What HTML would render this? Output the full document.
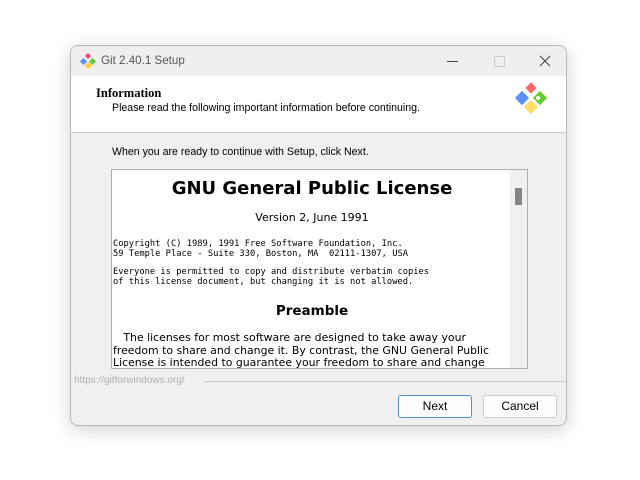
<!DOCTYPE html>
<html><head><style>
body{margin:0;width:640px;height:480px;background:#fff;position:relative;overflow:hidden;font-family:"Liberation Sans",sans-serif;}
.win{position:absolute;left:70px;top:45px;width:495px;height:379px;background:#f0f0f0;border:1px solid #b8b8b8;border-radius:8px;overflow:hidden;box-shadow:0 4px 18px rgba(0,0,0,.18);}
.title{position:absolute;left:0;top:0;width:495px;height:30px;background:#efefef;}
.title span{position:absolute;left:30px;top:8px;font-size:11.6px;color:#555;}
.hdr{position:absolute;left:0;top:30px;width:495px;height:56px;background:#fff;border-bottom:1px solid #c8c8c8;}
.abs{position:absolute;}
.box{position:absolute;left:40px;top:123px;width:415px;height:198px;background:#fff;border:1px solid #b0b0b0;overflow:hidden;}
.mono{font-family:"DejaVu Sans Mono","Liberation Mono",monospace;font-size:8.75px;line-height:9.5px;color:#000;position:absolute;left:1px;white-space:pre;}
.btn{position:absolute;top:349px;width:72px;height:21px;border:1px solid #ccc;border-radius:3px;background:#fdfdfd;font-size:12px;text-align:center;line-height:21px;color:#000;}
</style></head><body>
<div class="win">
 <div class="title">
  <svg class="abs" style="left:9px;top:7px" width="16" height="16" viewBox="0 0 16 16"><rect x="1" y="6" width="5" height="5" fill="#5b8ff9" transform="rotate(45 3.5 8.5)"/><rect x="6" y="1" width="4" height="4" fill="#f36" transform="rotate(45 8 3)"/><rect x="10" y="6" width="5" height="5" fill="#6c3" transform="rotate(45 12.5 8.5)"/><rect x="6" y="10" width="5" height="5" fill="#fc3" transform="rotate(45 8.5 12.5)"/></svg>
  <span>Git 2.40.1 Setup</span>
  <div class="abs" style="left:376px;top:15px;width:11px;height:1px;background:#444"></div>
  <div class="abs" style="left:423px;top:10px;width:9px;height:9px;border:1px solid #ccc"></div>
  <svg class="abs" style="left:468px;top:9px" width="12" height="12"><path d="M1 1L11 11M11 1L1 11" stroke="#444" stroke-width="1.1"/></svg>
 </div>
 <div class="hdr">
  <div class="abs" style="left:25px;top:10px;font-weight:bold;font-family:'Liberation Serif',serif;font-size:12.5px">Information</div>
  <div class="abs" style="left:41px;top:26px;font-size:10.6px;color:#000">Please read the following important information before continuing.</div>
  <svg class="abs" style="left:442px;top:5px" width="36" height="36" viewBox="0 0 36 36"><rect x="4" y="12" width="10" height="10" fill="#5b8ff9" transform="rotate(45 9 17)"/><rect x="14" y="3" width="8" height="8" fill="#f66" transform="rotate(45 18 7)"/><rect x="22" y="12" width="10" height="10" fill="#6c3" transform="rotate(45 27 17)"/><rect x="13" y="21" width="10" height="10" fill="#fd6" transform="rotate(45 18 26)"/><circle cx="25" cy="17" r="2" fill="#fff"/></svg>
 </div>
 <div class="abs" style="left:41px;top:100px;font-size:10.6px">When you are ready to continue with Setup, click Next.</div>
 <div class="box">
  <div class="abs" style="left:0;width:400px;top:8px;text-align:center;font-family:'DejaVu Sans',sans-serif;font-weight:bold;font-size:18px">GNU General Public License</div>
  <div class="abs" style="left:0;width:400px;top:41px;text-align:center;font-family:'DejaVu Sans',sans-serif;font-size:11px">Version 2, June 1991</div>
  <div class="mono" style="top:70px">Copyright (C) 1989, 1991 Free Software Foundation, Inc.
59 Temple Place - Suite 330, Boston, MA  02111-1307, USA</div>
  <div class="mono" style="top:98px">Everyone is permitted to copy and distribute verbatim copies
of this license document, but changing it is not allowed.</div>
  <div class="abs" style="left:0;width:400px;top:133px;text-align:center;font-family:'DejaVu Sans',sans-serif;font-weight:bold;font-size:13.5px">Preamble</div>
  <div class="abs" style="left:1px;top:162px;font-family:'DejaVu Sans',sans-serif;font-size:10.9px;line-height:12.5px;white-space:pre">   The licenses for most software are designed to take away your
freedom to share and change it. By contrast, the GNU General Public
License is intended to guarantee your freedom to share and change</div>
  <div class="abs" style="left:398px;top:0;width:17px;height:198px;background:#f0f0f0"></div>
  <div class="abs" style="left:403px;top:18px;width:7px;height:17px;background:#858585"></div>
 </div>
 <div class="abs" style="left:3px;top:329px;font-size:10px;color:#b0b0b0">https://gitforwindows.org/</div>
 <div class="abs" style="left:133px;top:335px;width:362px;height:1px;background:#c8c8c8"></div>
 <div class="btn" style="left:327px;border-color:#4a90d9;">Next</div>
 <div class="btn" style="left:412px">Cancel</div>
</div>
</body></html>
